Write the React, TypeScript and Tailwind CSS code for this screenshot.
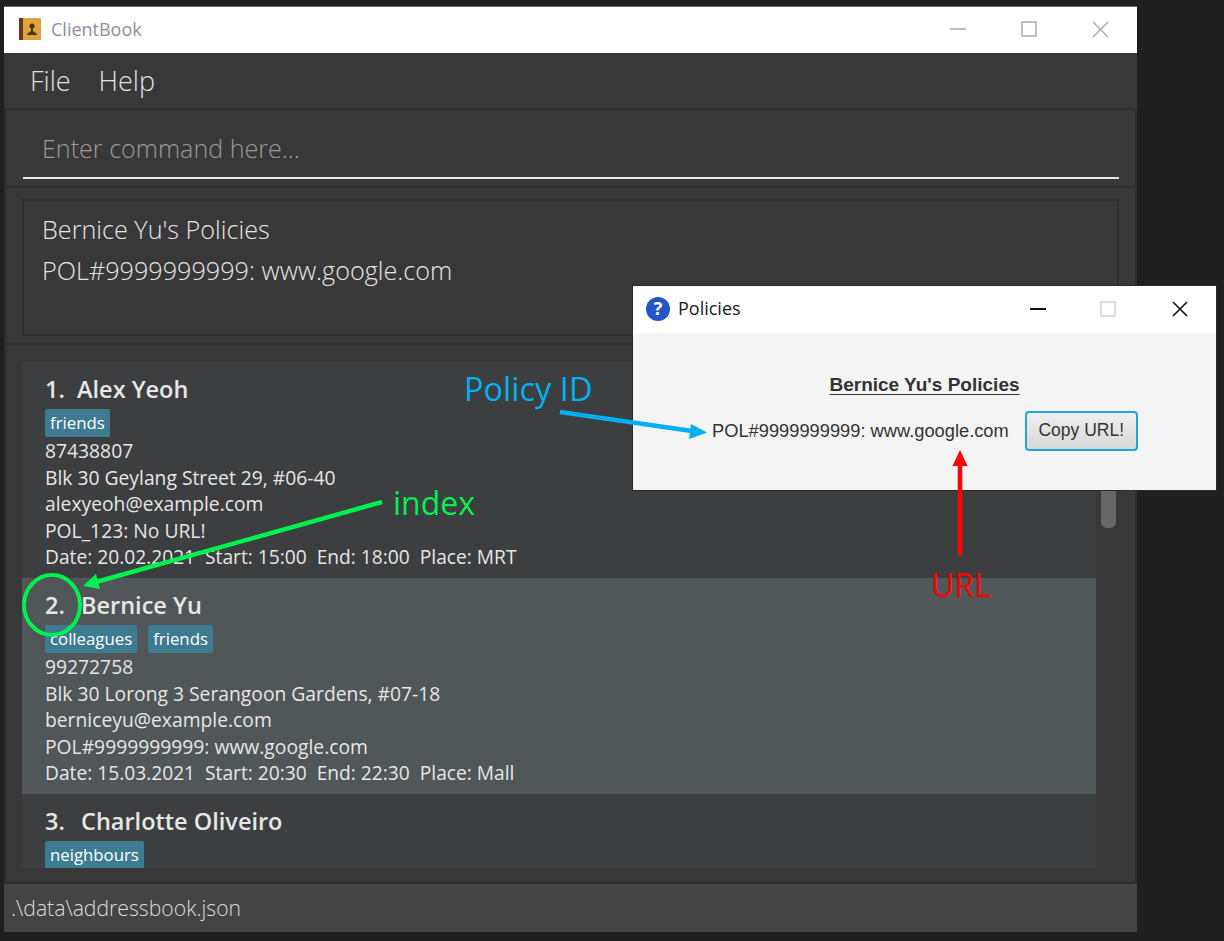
const FONT = { fontFamily: '"Open Sans", "Noto Sans", sans-serif' };

const persons = [
  {
    index: 1,
    name: 'Alex Yeoh',
    tags: ['friends'],
    phone: '87438807',
    address: 'Blk 30 Geylang Street 29, #06-40',
    email: 'alexyeoh@example.com',
    policy: 'POL_123: No URL!',
    meeting: 'Date: 20.02.2021\u00a0\u00a0Start: 15:00\u00a0\u00a0End: 18:00\u00a0\u00a0Place: MRT',
  },
  {
    index: 2,
    name: 'Bernice Yu',
    tags: ['colleagues', 'friends'],
    phone: '99272758',
    address: 'Blk 30 Lorong 3 Serangoon Gardens, #07-18',
    email: 'berniceyu@example.com',
    policy: 'POL#9999999999: www.google.com',
    meeting: 'Date: 15.03.2021\u00a0\u00a0Start: 20:30\u00a0\u00a0End: 22:30\u00a0\u00a0Place: Mall',
    selected: true,
  },
  {
    index: 3,
    name: 'Charlotte Oliveiro',
    tags: ['neighbours'],
  },
];

type Person = (typeof persons)[number];

function BookIcon() {
  return (
    <svg width="22" height="22" viewBox="0 0 22 22">
      <rect x="0" y="0" width="22" height="22" rx="1" fill="#dfa23e" />
      <rect x="0" y="0" width="4" height="22" fill="#5a3a20" />
      <circle cx="13" cy="8" r="2.500" fill="#4a3416" />
      <path d="M12 10h2v3l4 3v1H8v-1l4-3z" fill="#4a3416" />
    </svg>
  );
}

function PersonCard({ person }: { person: Person }) {
  return (
    <div className={`h-[216px] shrink-0 pl-[23px] pt-[11px] ${person.selected ? 'bg-[#515658]' : 'bg-[#3c3e3f]'}`}>
      <div className="flex h-[34px] items-center text-[23.500px] font-semibold text-[#e6e6e6]">
        <span className={person.index === 1 ? 'w-[32px]' : 'w-[36px]'}>{person.index}.</span>
        <span>{person.name}</span>
      </div>
      <div className="mt-[2px] flex gap-[11px]">
        {person.tags.map((tag) => (
          <span key={tag} className="flex h-[28px] items-center rounded-[2px] bg-[#3e7b91] px-[5px] text-[16.800px] text-white">
            {tag}
          </span>
        ))}
      </div>
      {person.phone && (
        <div className="mt-[1px] text-[19.300px] leading-[26.600px] text-[#e6e6e6]">
          <div>{person.phone}</div>
          <div>{person.address}</div>
          <div>{person.email}</div>
          <div>{person.policy}</div>
          <div className="text-[19.200px]">{person.meeting}</div>
        </div>
      )}
    </div>
  );
}

function PoliciesDialog() {
  return (
    <div className="absolute left-[633px] top-[286px] flex h-[204px] w-[583px] flex-col bg-[#f4f4f4] shadow-[0_0_0_1px_#2a2a2a]">
      <div className="flex h-[47px] items-center bg-white pb-[2px] pl-[13px]">
        <span className="flex h-[24px] w-[24px] items-center justify-center rounded-full bg-[#2457c5] text-[18px] font-bold text-white">?</span>
        <span className="ml-[8px] text-[18px] text-[#1a1a1a]">Policies</span>
        <svg className="ml-[288px]" width="18" height="18" viewBox="0 0 18 18" stroke="#111" fill="none">
          <path d="M1 9h16" strokeWidth="2" />
        </svg>
        <svg className="ml-[53px]" width="16" height="16" viewBox="0 0 16 16" stroke="#d4d4d4" fill="none" strokeWidth="1.5">
          <rect x="1" y="1" width="14" height="14" />
        </svg>
        <svg className="ml-[55px]" width="18" height="18" viewBox="0 0 18 18" stroke="#111" fill="none" strokeWidth="1.6">
          <path d="M2 2l14 14M16 2L2 16" />
        </svg>
      </div>
      <div className="flex flex-col" style={{ fontFamily: '"Liberation Sans", sans-serif' }}>
        <div className="mt-[38px] text-center text-[19px] font-bold text-[#333] underline underline-offset-[3px]">
          Bernice Yu's Policies
        </div>
        <div className="mt-[11px] flex items-center pl-[79px]">
          <span className="pt-[1px] text-[18.300px] text-[#333]">POL#9999999999: www.google.com</span>
          <span className="ml-[16px] flex h-[40px] w-[113px] items-center justify-center rounded-[4px] border-2 border-[#1fa7dc] bg-gradient-to-b from-[#efefef] to-[#d8d8d8] text-[17.500px] text-[#333]">
            Copy URL!
          </span>
        </div>
      </div>
    </div>
  );
}

function Annotations() {
  return (
    <>
      <svg className="pointer-events-none absolute left-0 top-0" width="1224" height="941" viewBox="0 0 1224 941" fill="none">
        <path d="M560 412L692 431" stroke="#00b0f0" strokeWidth="4.500" />
        <path d="M707 432.500L691 424L689 439z" fill="#00b0f0" />
        <path d="M382 502L96 582" stroke="#00f050" strokeWidth="4.500" />
        <path d="M83 586L96 574L100 589z" fill="#00f050" />
        <ellipse cx="52" cy="605" rx="28" ry="30" stroke="#00f050" strokeWidth="4" />
        <path d="M960 555V464" stroke="#ff0000" strokeWidth="4.500" />
        <path d="M960 450L952.500 466H967.500z" fill="#ff0000" />
      </svg>
      <span className="absolute left-[464px] top-[367px] text-[32.500px] leading-[44px] text-[#00b0f0]">Policy ID</span>
      <span className="absolute left-[393px] top-[481px] text-[32px] leading-[44px] text-[#00f050]">index</span>
      <span className="absolute left-[931px] top-[563px] text-[32px] leading-[44px] text-[#ff0000]">URL</span>
    </>
  );
}

export default function App() {
  return (
    <div className="relative h-[941px] w-[1224px] overflow-hidden bg-[#1f1f1f] pl-[4px] pt-[6px]" style={FONT}>
      <div className="flex h-[926px] w-[1133px] flex-col bg-[#383838]">
        {/* Title bar */}
        <div className="flex h-[47px] shrink-0 items-center border-t border-[#666] bg-white pb-[2px] pl-[15px]">
          <BookIcon />
          <span className="ml-[10px] text-[18px] text-[#8f8f9c]">ClientBook</span>
          <svg className="ml-[808px]" width="16" height="16" viewBox="0 0 16 16" fill="none" stroke="#aaa" strokeWidth="1.500">
            <path d="M0 8h16" />
          </svg>
          <svg className="ml-[55px]" width="16" height="16" viewBox="0 0 16 16" fill="none" stroke="#aaa" strokeWidth="1.500">
            <rect x="1" y="1" width="14" height="14" />
          </svg>
          <svg className="ml-[55px]" width="17" height="17" viewBox="0 0 17 17" fill="none" stroke="#aaa" strokeWidth="1.400">
            <path d="M1 1l15 15M16 1L1 16" />
          </svg>
        </div>

        {/* Menu */}
        <div className="flex h-[55px] shrink-0 items-center gap-[28px] pl-[26px] pt-[2px] text-[27px] font-light text-[#e0e0e0]">
          <span>File</span>
          <span>Help</span>
        </div>

        {/* Command box */}
        <div className="h-[80px] shrink-0 border-2 border-[#2e2e2e] pl-[17px] pr-[16px]">
          <div className="flex h-[69px] items-center border-b-2 border-[#e6e6e6] pl-[19px] pt-[10px] text-[25.100px] font-light text-[#9a9a9a]">
            Enter command here...
          </div>
        </div>

        {/* Result display */}
        <div className="h-[157px] shrink-0 border-x-2 border-b-2 border-[#2e2e2e] px-[16px] pt-[11px]">
          <div className="h-[137px] border-2 border-[#2e2e2e] pl-[18px] pt-[8px] text-[25.200px] font-light leading-[41px] text-[#e6e6e6]">
            <div>Bernice Yu's Policies</div>
            <div>POL#9999999999: www.google.com</div>
          </div>
        </div>

        {/* Person list */}
        <div className="flex min-h-0 flex-1 border-x-2 border-b-2 border-[#2e2e2e] pl-[16px] pt-[17px]">
          <div className="mb-[14px] flex w-[1074px] flex-col overflow-hidden">
            {persons.map((person) => (
              <PersonCard key={person.index} person={person} />
            ))}
          </div>
          <div className="ml-[5px] w-[15px] pt-[100px]">
            <div className="h-[66px] rounded-[6px] bg-[#666]" />
          </div>
        </div>

        {/* Status bar */}
        <div className="flex h-[48px] shrink-0 items-center bg-[#444] pb-[1px] pl-[7px] text-[21.200px] font-light text-[#dcdcdc]">
          .\data\addressbook.json
        </div>
      </div>

      <PoliciesDialog />
      <Annotations />
    </div>
  );
}
